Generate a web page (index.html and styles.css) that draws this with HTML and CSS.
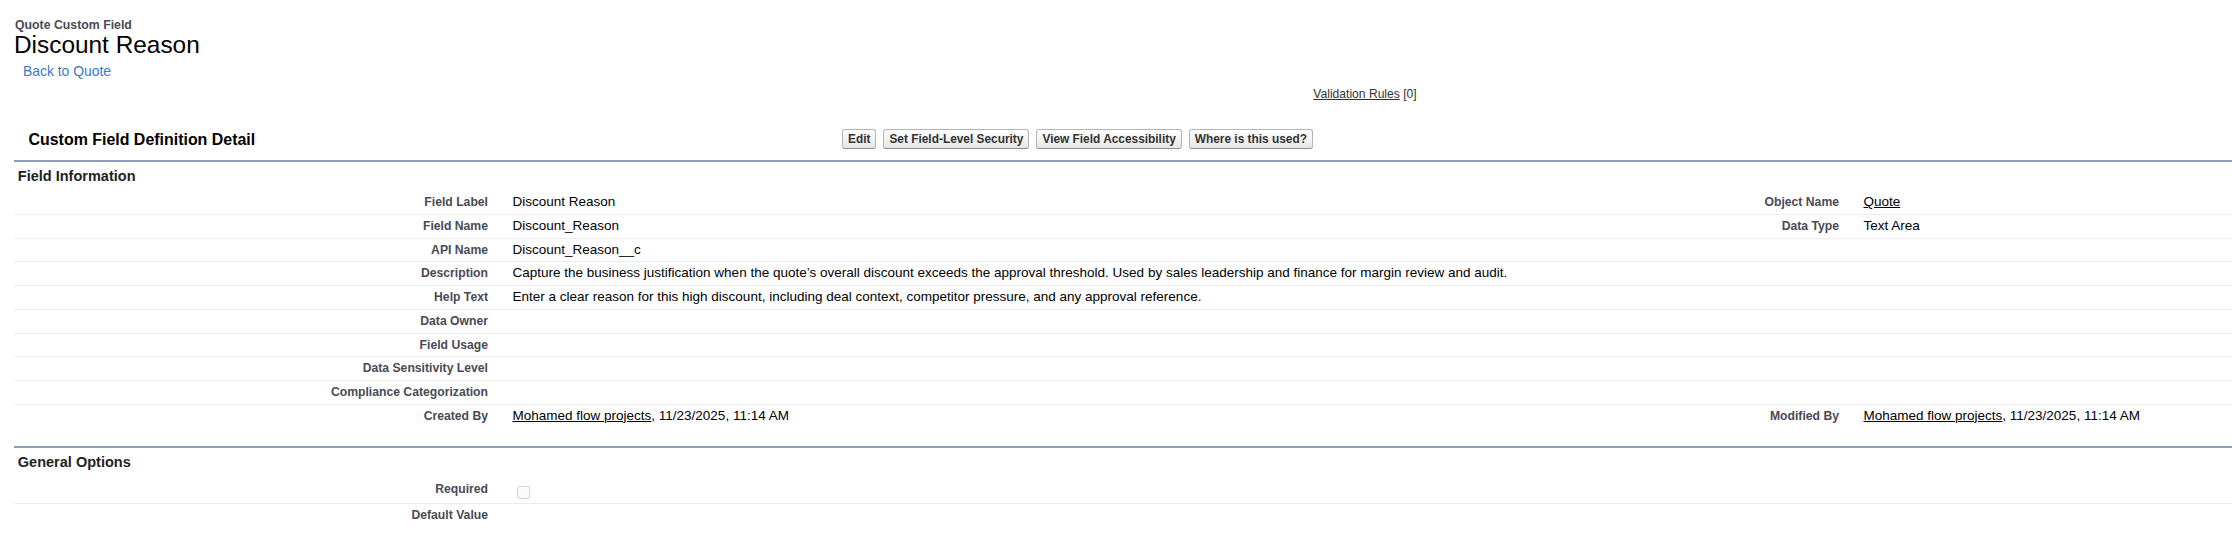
FILE: index.html
```html
<!DOCTYPE html>
<html lang="en">
<head>
    <meta charset="UTF-8">
    <meta name="viewport" content="width=device-width, initial-scale=1.0">
    <title>Discount Reason ~ Quote Custom Field</title>
    <link rel="stylesheet" href="styles.css">
</head>
<body>
    <div class="page">
        <div class="page-header">
            <div class="page-type">Quote Custom Field</div>
            <h1 class="page-title">Discount Reason</h1>
            <a class="back-link" href="#">Back to Quote</a>
        </div>

        <div class="hover-links">
            <a href="#">Validation Rules</a> <span class="count">[0]</span>
        </div>

        <div class="block">
            <div class="block-header">
                <h2>Custom Field Definition Detail</h2>
                <div class="buttons">
                    <button class="btn">Edit</button>
                    <button class="btn">Set Field-Level Security</button>
                    <button class="btn">View Field Accessibility</button>
                    <button class="btn">Where is this used?</button>
                </div>
            </div>

            <div class="section">
                <h3 class="section-title">Field Information</h3>
                <div class="detail-list">
                    <div class="row">
                        <div class="label">Field Label</div>
                        <div class="value">Discount Reason</div>
                        <div class="label">Object Name</div>
                        <div class="value"><a href="#">Quote</a></div>
                    </div>
                    <div class="row">
                        <div class="label">Field Name</div>
                        <div class="value">Discount_Reason</div>
                        <div class="label">Data Type</div>
                        <div class="value">Text Area</div>
                    </div>
                    <div class="row">
                        <div class="label">API Name</div>
                        <div class="value wide">Discount_Reason__c</div>
                    </div>
                    <div class="row">
                        <div class="label">Description</div>
                        <div class="value wide">Capture the business justification when the quote’s overall discount exceeds the approval threshold. Used by sales leadership and finance for margin review and audit.</div>
                    </div>
                    <div class="row">
                        <div class="label">Help Text</div>
                        <div class="value wide">Enter a clear reason for this high discount, including deal context, competitor pressure, and any approval reference.</div>
                    </div>
                    <div class="row">
                        <div class="label">Data Owner</div>
                        <div class="value wide"></div>
                    </div>
                    <div class="row">
                        <div class="label">Field Usage</div>
                        <div class="value wide"></div>
                    </div>
                    <div class="row">
                        <div class="label">Data Sensitivity Level</div>
                        <div class="value wide"></div>
                    </div>
                    <div class="row">
                        <div class="label">Compliance Categorization</div>
                        <div class="value wide"></div>
                    </div>
                    <div class="row last">
                        <div class="label">Created By</div>
                        <div class="value"><a href="#">Mohamed flow projects</a>, 11/23/2025, 11:14 AM</div>
                        <div class="label">Modified By</div>
                        <div class="value"><a href="#">Mohamed flow projects</a>, 11/23/2025, 11:14 AM</div>
                    </div>
                </div>
            </div>

            <div class="section">
                <h3 class="section-title">General Options</h3>
                <div class="detail-list">
                    <div class="row tall">
                        <div class="label">Required</div>
                        <div class="value wide"><span class="checkbox"></span></div>
                    </div>
                    <div class="row last">
                        <div class="label">Default Value</div>
                        <div class="value wide"></div>
                    </div>
                </div>
            </div>
        </div>
    </div>
</body>
</html>
```

FILE: styles.css
```css
* {
    margin: 0;
    padding: 0;
    box-sizing: border-box;
}

body {
    font-family: 'Liberation Sans', Arial, Helvetica, sans-serif;
    background: #fff;
    color: #000;
}

a {
    color: #000;
}

.page {
    padding-left: 14px;
}

/* page header */

.page-type {
    margin-top: 18.4px;
    font-size: 12.3px;
    line-height: 14px;
    font-weight: bold;
    color: #4a4a56;
    padding-left: 1px;
}

.page-title {
    font-size: 24.4px;
    line-height: 26px;
    font-weight: normal;
}

.back-link {
    display: inline-block;
    margin-top: 5px;
    margin-left: 9px;
    font-size: 13.9px;
    line-height: 16px;
    color: #3a7bbf;
    text-decoration: none;
}

.hover-links {
    margin-top: 6.3px;
    margin-left: 484px;
    text-align: center;
    font-size: 12.1px;
    line-height: 14px;
    color: #333;
}

.hover-links a {
    color: #333;
}

/* detail block */

.block-header {
    display: flex;
    align-items: center;
    height: 40px;
    margin-top: 19.7px;
    padding-left: 14.5px;
}

.block-header h2 {
    width: 813.5px;
    font-size: 15.95px;
    font-weight: bold;
}

.buttons {
    display: flex;
    gap: 7px;
    margin-top: -2.5px;
}

.btn {
    font-family: inherit;
    font-size: 11.88px;
    line-height: 13px;
    font-weight: bold;
    color: #333;
    padding: 2.5px 5px;
    border: 1px solid #b5b5b5;
    border-bottom-color: #8f8f8f;
    border-radius: 3px;
    background: linear-gradient(#ffffff, #f0f0f0 60%, #e6e6e6);
    cursor: pointer;
}

.section {
    border-top: 2px solid #8e9dbe;
}

.section + .section {
    margin-top: 18.1px;
}

.section-title {
    padding: 5px 0 6px 3.8px;
    font-size: 14.52px;
    line-height: 18px;
    font-weight: bold;
    color: #222;
}

.row {
    display: grid;
    grid-template-columns: 486px 865px 486px 1fr;
    border-bottom: 1px solid #ececec;
}

.row.last {
    border-bottom: none;
}

.label {
    padding: 4px 12px 4px 2px;
    font-size: 12.2px;
    line-height: 14.7px;
    font-weight: bold;
    color: #4a4a56;
    text-align: right;
}

.row.tall .label {
    padding-top: 5.5px;
}

.value {
    padding: 4px 12px 4px 12.5px;
    font-size: 13.5px;
    line-height: 14.7px;
    color: #000;
}

.value.wide {
    grid-column: 2 / 5;
}

.checkbox {
    display: block;
    width: 13px;
    height: 13px;
    margin: 5.5px 0 0 4.5px;
    border: 1px solid #d6d6d6;
    border-radius: 2px;
    background: #fbfbfb;
}
```
